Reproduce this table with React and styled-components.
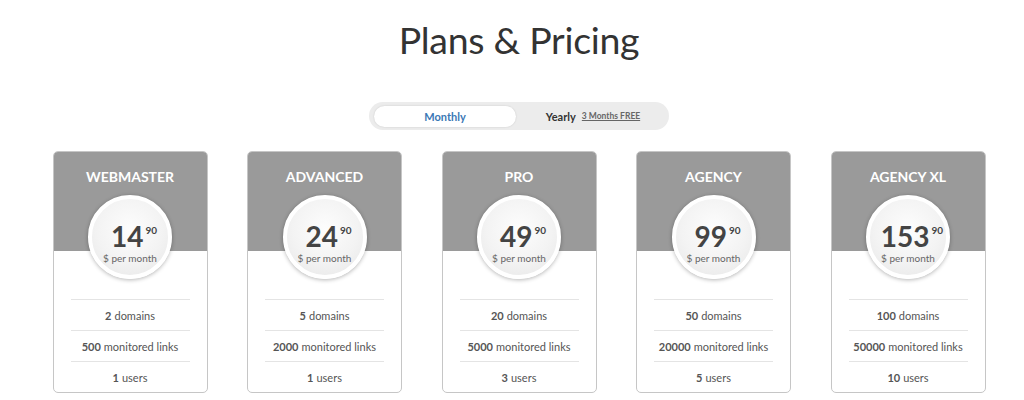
import React from 'react';
import styled, { createGlobalStyle } from 'styled-components';

const GlobalStyle = createGlobalStyle`
  body {
    margin: 0;
    background: #fff;
    font-family: Lato, "Open Sans", sans-serif;
  }
`;

const Page = styled.div`
  width: 1024px;
  height: 400px;
  box-sizing: border-box;
  padding-left: 14px;
  display: flex;
  flex-direction: column;
  align-items: center;
  overflow: hidden;
`;

const Title = styled.h1`
  margin: 15px 0 0;
  font-size: 37.5px;
  line-height: 50px;
  font-weight: 400;
  color: #333;
  letter-spacing: -0.3px;
`;

const Toggle = styled.div`
  margin-top: 37px;
  width: 300px;
  height: 28px;
  box-sizing: border-box;
  padding: 4px 5px;
  border-radius: 14px;
  background: #ececec;
  display: flex;
  align-items: center;
`;

const ToggleOption = styled.div`
  width: 144px;
  height: 21px;
  border-radius: 11px;
  display: flex;
  align-items: center;
  justify-content: center;
  gap: 6px;
  font-size: 11px;
  font-weight: 700;
  color: ${p => (p.$active ? '#3a78b5' : '#333')};
  background: ${p => (p.$active ? '#fff' : 'transparent')};
  box-shadow: ${p => (p.$active ? '0 0 2px rgba(0,0,0,0.15)' : 'none')};
  margin-left: ${p => (p.$active ? '0' : '6px')};
`;

const Promo = styled.span`
  font-size: 8.5px;
  color: #666;
  text-decoration: underline;
`;

const Cards = styled.div`
  margin-top: 21px;
  display: flex;
  gap: 39.5px;
`;

const Card = styled.div`
  width: 155px;
  box-sizing: border-box;
  border: 1px solid #c6c6c6;
  border-radius: 5px;
  overflow: hidden;
  background: #fff;
`;

const Header = styled.div`
  background: #9a9a9a;
  padding-top: 15px;
  display: flex;
  flex-direction: column;
  align-items: center;
`;

const PlanName = styled.div`
  color: #fff;
  font-size: 14px;
  font-weight: 700;
  line-height: 20px;
  text-transform: uppercase;
`;

const Circle = styled.div`
  position: relative;
  z-index: 1;
  margin-top: 8px;
  margin-bottom: -28px;
  width: 84px;
  height: 84px;
  box-sizing: border-box;
  border: 4px solid #fff;
  border-radius: 50%;
  background: radial-gradient(circle at 50% 40%, #fdfdfd 0%, #f3f3f3 55%, #e6e6e6 100%);
  box-shadow: 0 1px 4px rgba(0, 0, 0, 0.3);
  display: flex;
  flex-direction: column;
  align-items: center;
  justify-content: center;
  padding-top: 12px;
`;

const Price = styled.div`
  display: flex;
  align-items: flex-start;
  color: #444;
  font-size: 28px;
  font-weight: 700;
  line-height: 28px;
  margin-left: 8px;
`;

const Cents = styled.span`
  font-size: 10px;
  line-height: 12px;
  margin-left: 2px;
  margin-top: 2px;
`;

const Per = styled.div`
  font-size: 10px;
  color: #666;
  margin-top: 2px;
`;

const Body = styled.div`
  padding: 48px 17px 0;
`;

const Row = styled.div`
  height: 30px;
  border-top: 1px solid #e4e4e4;
  display: flex;
  align-items: center;
  justify-content: center;
  font-size: 11px;
  color: #555;
  b {
    font-weight: 700;
    margin-right: 3px;
  }
`;

const plans = [
  { name: 'Webmaster', price: 14, domains: 2, links: 500, users: 1 },
  { name: 'Advanced', price: 24, domains: 5, links: 2000, users: 1 },
  { name: 'Pro', price: 49, domains: 20, links: 5000, users: 3 },
  { name: 'Agency', price: 99, domains: 50, links: 20000, users: 5 },
  { name: 'Agency XL', price: 153, domains: 100, links: 50000, users: 10 },
];

const App = () => {
  return (
    <Page>
      <GlobalStyle />
      <Title>Plans &amp; Pricing</Title>
      <Toggle>
        <ToggleOption $active>Monthly</ToggleOption>
        <ToggleOption>
          Yearly <Promo>3 Months FREE</Promo>
        </ToggleOption>
      </Toggle>
      <Cards>
        {plans.map(plan => (
          <Card key={plan.name}>
            <Header>
              <PlanName>{plan.name}</PlanName>
              <Circle>
                <Price>
                  {plan.price}
                  <Cents>90</Cents>
                </Price>
                <Per>$ per month</Per>
              </Circle>
            </Header>
            <Body>
              <Row><b>{plan.domains}</b>domains</Row>
              <Row><b>{plan.links}</b>monitored links</Row>
              <Row><b>{plan.users}</b>users</Row>
            </Body>
          </Card>
        ))}
      </Cards>
    </Page>
  );
};

export default App;
